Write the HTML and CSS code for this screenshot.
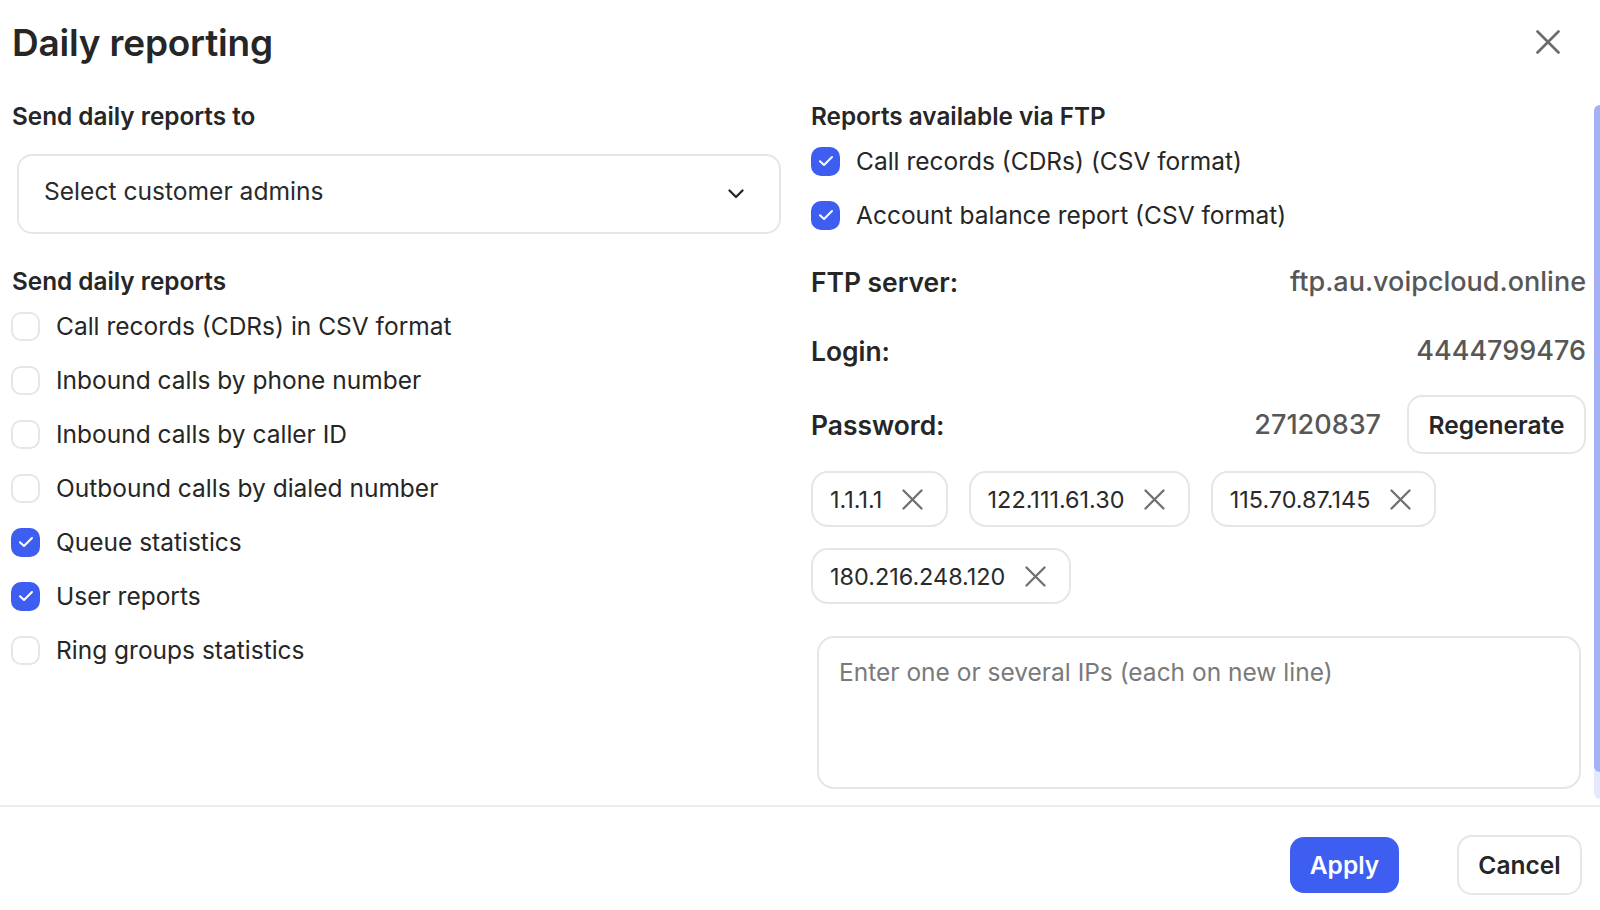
FILE: index.html
```html
<!DOCTYPE html>
<html lang="en">
<head>
<meta charset="utf-8">
<title>Daily reporting</title>
<link rel="stylesheet" href="styles.css">
</head>
<body>
<div class="modal">
  <header class="header">
    <h1 class="title">Daily reporting</h1>
    <button class="close" aria-label="Close">
      <svg width="24" height="24" viewBox="0 0 24 24"><path d="M1.5 1.5L22.5 22.5M22.5 1.5L1.5 22.5" stroke="#6b6b6b" stroke-width="2.6" stroke-linecap="round" fill="none"/></svg>
    </button>
  </header>

  <main class="content">
    <section class="col left">
      <div class="label">Send daily reports to</div>
      <div class="select">
        <span class="select-text">Select customer admins</span>
        <svg width="18" height="12" viewBox="0 0 18 12"><path d="M2.5 2.5L9 9L15.5 2.5" stroke="#2a2a2a" stroke-width="2.4" fill="none" stroke-linecap="round" stroke-linejoin="round"/></svg>
      </div>
      <div class="label second">Send daily reports</div>
      <ul class="checks">
        <li class="check"><span class="box"></span>Call records (CDRs) in CSV format</li>
        <li class="check"><span class="box"></span>Inbound calls by phone number</li>
        <li class="check"><span class="box"></span>Inbound calls by caller ID</li>
        <li class="check"><span class="box"></span>Outbound calls by dialed number</li>
        <li class="check"><span class="box on"><svg width="16" height="12" viewBox="0 0 16 12"><path d="M2 6.2L6 10L14 2" stroke="#fff" stroke-width="2" fill="none" stroke-linecap="round" stroke-linejoin="round"/></svg></span>Queue statistics</li>
        <li class="check"><span class="box on"><svg width="16" height="12" viewBox="0 0 16 12"><path d="M2 6.2L6 10L14 2" stroke="#fff" stroke-width="2" fill="none" stroke-linecap="round" stroke-linejoin="round"/></svg></span>User reports</li>
        <li class="check"><span class="box"></span>Ring groups statistics</li>
      </ul>
    </section>

    <section class="col right">
      <div class="label">Reports available via FTP</div>
      <ul class="checks">
        <li class="check"><span class="box on"><svg width="16" height="12" viewBox="0 0 16 12"><path d="M2 6.2L6 10L14 2" stroke="#fff" stroke-width="2" fill="none" stroke-linecap="round" stroke-linejoin="round"/></svg></span>Call records (CDRs) (CSV format)</li>
        <li class="check"><span class="box on"><svg width="16" height="12" viewBox="0 0 16 12"><path d="M2 6.2L6 10L14 2" stroke="#fff" stroke-width="2" fill="none" stroke-linecap="round" stroke-linejoin="round"/></svg></span>Account balance report (CSV format)</li>
      </ul>
      <div class="info">
        <div class="info-row"><span class="key">FTP server:</span><span class="val">ftp.au.voipcloud.online</span></div>
        <div class="info-row"><span class="key">Login:</span><span class="val">4444799476</span></div>
        <div class="info-row pw-row"><span class="key">Password:</span><span class="val pw">27120837</span><button class="btn-outline regen">Regenerate</button></div>
      </div>
      <div class="chips">
        <span class="chip">1.1.1.1<svg width="21" height="21" viewBox="0 0 21 21"><path d="M1.5 1.5L19.5 19.5M19.5 1.5L1.5 19.5" stroke="#707070" stroke-width="2.3" stroke-linecap="round"/></svg></span>
        <span class="chip">122.111.61.30<svg width="21" height="21" viewBox="0 0 21 21"><path d="M1.5 1.5L19.5 19.5M19.5 1.5L1.5 19.5" stroke="#707070" stroke-width="2.3" stroke-linecap="round"/></svg></span>
        <span class="chip">115.70.87.145<svg width="21" height="21" viewBox="0 0 21 21"><path d="M1.5 1.5L19.5 19.5M19.5 1.5L1.5 19.5" stroke="#707070" stroke-width="2.3" stroke-linecap="round"/></svg></span>
        <span class="chip">180.216.248.120<svg width="21" height="21" viewBox="0 0 21 21"><path d="M1.5 1.5L19.5 19.5M19.5 1.5L1.5 19.5" stroke="#707070" stroke-width="2.3" stroke-linecap="round"/></svg></span>
      </div>
      <textarea class="ips" placeholder="Enter one or several IPs (each on new line)"></textarea>
    </section>
    <div class="scroll-track"></div>
    <div class="scroll-thumb"></div>
  </main>

  <footer class="footer">
    <button class="btn-primary">Apply</button>
    <button class="btn-outline cancel">Cancel</button>
  </footer>
</div>
</body>
</html>
```

FILE: styles.css
```css
* { box-sizing: border-box; }
html, body { margin: 0; padding: 0; background: #fff; }
body {
  font-family: Inter, "Noto Sans", sans-serif;
  color: #262626;
}
.modal {
  width: 1600px;
  height: 910px;
  display: flex;
  flex-direction: column;
  overflow: hidden;
}
.header {
  height: 84px;
  flex: none;
  display: flex;
  align-items: center;
  justify-content: space-between;
  padding: 0 40px 0 12px;
}
.title {
  margin: 0;
  font-size: 37px;
  font-weight: 600;
  letter-spacing: -0.2px;
  color: #262626;
}
.close {
  border: 0;
  background: none;
  padding: 0;
  width: 24px;
  height: 24px;
  display: flex;
}
.content {
  position: relative;
  flex: 1;
  display: grid;
  grid-template-columns: 769px 775px;
  column-gap: 30px;
  align-items: start;
  padding: 17px 0 0 12px;
  border-bottom: 2px solid #ececec;
}
.col { display: flex; flex-direction: column; min-width: 0; }
.label {
  font-size: 24.3px;
  font-weight: 600;
  line-height: 30px;
  color: #262626;
}
.label.second { margin-top: 32px; }
.select {
  margin: 23px 0 0 5px;
  height: 80px;
  border: 2px solid #e6e6e6;
  border-radius: 15px;
  display: flex;
  align-items: center;
  justify-content: space-between;
  padding: 0 34px 0 25px;
  font-size: 24.6px;
  color: #2a2a2a;
}
.select-text { margin-bottom: 6px; }
.checks {
  list-style: none;
  margin: 3px 0 0;
  padding: 0;
}
.check {
  height: 54px;
  display: flex;
  align-items: center;
  font-size: 24.5px;
  color: #262626;
}
.left .check { margin-left: -1px; }
.box {
  width: 29px;
  height: 29px;
  border: 2px solid #e6e6e6;
  border-radius: 10px;
  margin-right: 16px;
  flex: none;
  display: flex;
  align-items: center;
  justify-content: center;
}
.box.on {
  background: #3d5ef0;
  border-color: #3d5ef0;
}
.info {
  margin-top: 10px;
  display: flex;
  flex-direction: column;
  gap: 10px;
}
.info-row {
  height: 59px;
  display: flex;
  align-items: center;
}
.pw-row { margin-top: 5px; }
.key {
  font-size: 26.4px;
  font-weight: 600;
  color: #262626;
  margin-right: auto;
}
.val {
  font-size: 27px;
  font-weight: 500;
  color: #575757;
}
.val.pw { margin-right: 26px; }
.btn-outline {
  font-family: inherit;
  background: #fff;
  border: 2px solid #e6e6e6;
  border-radius: 15px;
  color: #262626;
  font-weight: 600;
  padding: 0;
}
.regen {
  height: 59px;
  width: 179px;
  font-size: 24.5px;
}
.chips {
  margin-top: 17px;
  display: flex;
  flex-wrap: wrap;
  column-gap: 20.4px;
  row-gap: 21.4px;
}
.chip {
  height: 56px;
  display: inline-flex;
  align-items: center;
  gap: 20px;
  padding: 0 23px 0 17px;
  border: 2px solid #e6e6e6;
  border-radius: 17px;
  font-size: 23.4px;
  color: #2a2a2a;
}
.chip svg { flex: none; }
.ips {
  margin: 32px 5px 0 6px;
  height: 153px;
  border: 2px solid #e6e6e6;
  border-radius: 17px;
  padding: 19px 20px;
  font-family: inherit;
  font-size: 24.5px;
  line-height: 30px;
  resize: none;
  outline: none;
  display: block;
}
.ips::placeholder { color: #7a7a7a; }
.scroll-track {
  position: absolute;
  right: 0;
  top: 21px;
  width: 6px;
  height: 694px;
  background: #e5e9fd;
  border-radius: 6px 0 0 6px;
}
.scroll-thumb {
  position: absolute;
  right: 0;
  top: 21px;
  width: 6px;
  height: 667px;
  background: #a5b1f7;
  border-radius: 6px 0 0 6px;
}
.footer {
  height: 103px;
  flex: none;
  display: flex;
  align-items: center;
  justify-content: flex-end;
  padding: 13px 18px 0 0;
  gap: 58px;
}
.btn-primary {
  font-family: inherit;
  height: 56px;
  width: 109px;
  background: #3d5ef0;
  color: #fff;
  border: 0;
  border-radius: 14px;
  font-size: 24.5px;
  font-weight: 600;
  padding: 0;
}
.cancel {
  height: 60px;
  width: 125px;
  font-size: 24.5px;
}
```
